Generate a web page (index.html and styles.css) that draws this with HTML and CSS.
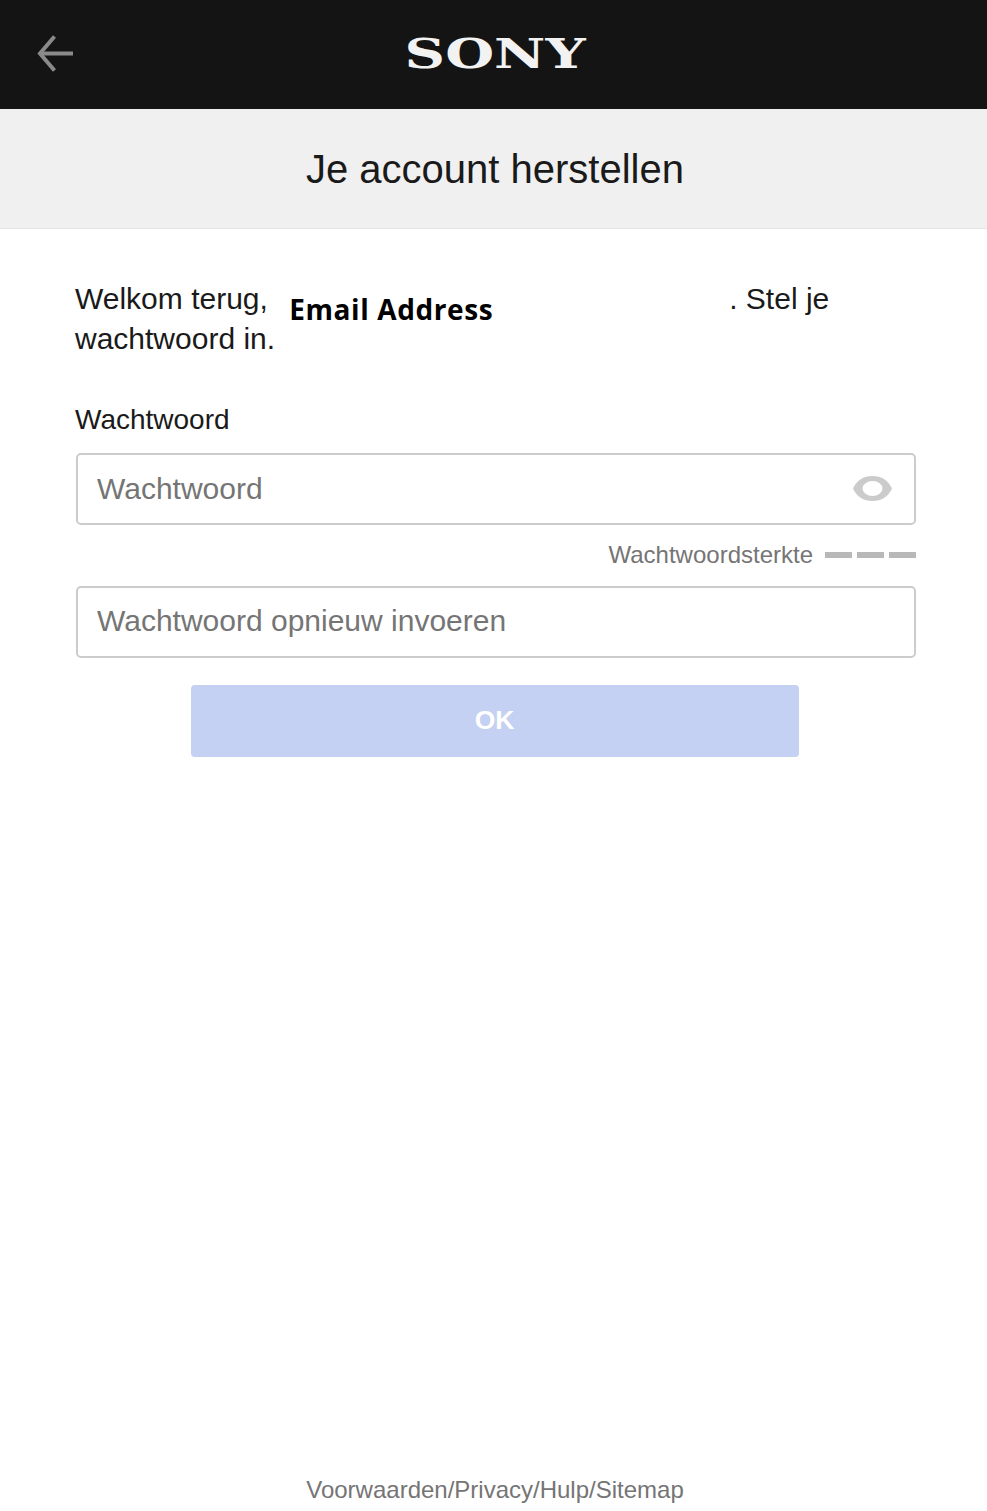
FILE: index.html
```html
<!DOCTYPE html>
<html lang="nl">
<head>
  <meta charset="UTF-8">
  <title>Je account herstellen</title>
  <meta name="viewport" content="width=device-width, initial-scale=1.0">
  <link rel="stylesheet" href="styles.css">
</head>
<body>
  <header class="kop">
    <a class="terug" href="#" aria-label="Terug">
      <svg width="38" height="38" viewBox="0 0 38 38" fill="none" stroke="#8a8a8a" stroke-width="4">
        <path d="M37 18.500H4"/>
        <path d="M18.500 1.500L4 18.500L18.500 35.500"/>
      </svg>
    </a>
    <span class="logo">SONY</span>
  </header>

  <div class="titelbalk">
    <h1>Je account herstellen</h1>
  </div>

  <main class="inhoud">
    <p class="welkom">Welkom terug, <span class="adres">Email Address</span>. Stel je wachtwoord in.</p>

    <label class="veldnaam" for="wachtwoord">Wachtwoord</label>
    <div class="veld">
      <input id="wachtwoord" type="password" placeholder="Wachtwoord">
      <svg class="oog" width="39" height="25" viewBox="0 0 39 25">
        <path fill="#cbcbcb" fill-rule="evenodd" d="M0 12.500C3.500 4.500 10.500 0 19.500 0S35.500 4.500 39 12.500C35.500 20.500 28.500 25 19.500 25S3.500 20.500 0 12.500zM19.500 5A10 7.500 0 1 0 19.500 20A10 7.500 0 1 0 19.500 5z"/>
      </svg>
    </div>

    <div class="sterkte">
      <span>Wachtwoordsterkte</span>
      <div class="streepjes"><i></i><i></i><i></i></div>
    </div>

    <div class="veld herhaal">
      <input type="password" placeholder="Wachtwoord opnieuw invoeren" aria-label="Wachtwoord opnieuw invoeren">
    </div>

    <button class="knop" type="button">OK</button>
  </main>

  <footer class="voet">
    <a href="#">Voorwaarden/Privacy/Hulp/Sitemap</a>
  </footer>
</body>
</html>
```

FILE: styles.css
```css
* {
  box-sizing: border-box;
}

html, body {
  height: 100%;
}

body {
  margin: 0;
  display: flex;
  flex-direction: column;
  min-height: 1511px;
  font-family: "Liberation Sans", Arial, sans-serif;
  color: #1a1a1a;
  background-color: #fff;
}

.kop {
  position: relative;
  display: flex;
  align-items: center;
  justify-content: center;
  height: 109px;
  background-color: #141414;
}

.terug {
  position: absolute;
  left: 36px;
  top: 35px;
  display: block;
  height: 38px;
}

.logo {
  display: block;
  margin-left: 4px;
  font-family: "DejaVu Serif", "Liberation Serif", serif;
  font-weight: bold;
  font-size: 41px;
  line-height: 1;
  color: #f2f2f2;
  transform: scaleX(1.37);
}

.titelbalk {
  height: 120px;
  display: flex;
  align-items: center;
  justify-content: center;
  padding-top: 2px;
  padding-left: 3px;
  background-color: #f0f0f0;
  border-bottom: 1px solid #e4e4e4;
}

.titelbalk h1 {
  margin: 0;
  font-size: 40px;
  font-weight: normal;
  color: #1a1a1a;
}

.inhoud {
  flex: 1;
  display: flex;
  flex-direction: column;
  padding: 50px 71px 0 75px;
}

.welkom {
  margin: 0 0 41px;
  font-size: 30px;
  line-height: 40px;
}

.adres {
  display: inline-block;
  width: 453px;
  padding-left: 13px;
  position: relative;
  top: 11px;
  font-family: "Open Sans", sans-serif;
  font-size: 28px;
  font-weight: bold;
  letter-spacing: 0.6px;
  line-height: 30px;
  color: #000;
}

.veldnaam {
  display: block;
  margin-bottom: 13px;
  font-size: 28px;
  line-height: 40px;
}

.veld {
  position: relative;
  height: 72px;
  margin-left: 1px;
}

.veld input {
  display: block;
  width: 100%;
  height: 100%;
  padding: 0 19px;
  font-family: inherit;
  font-size: 30px;
  color: #1a1a1a;
  background-color: #fff;
  border: 2px solid #ccc;
  border-radius: 5px;
  outline: none;
}

.veld input::placeholder {
  color: #757575;
  opacity: 1;
}

.herhaal input {
  padding-bottom: 2px;
}

.oog {
  position: absolute;
  right: 24px;
  top: 23px;
}

.sterkte {
  display: flex;
  align-items: center;
  justify-content: flex-end;
  gap: 12px;
  height: 61px;
  padding-bottom: 2px;
  font-size: 24px;
  color: #757575;
}

.streepjes {
  display: flex;
  gap: 5px;
}

.streepjes i {
  display: block;
  width: 27px;
  height: 6px;
  background-color: #b8b8b8;
}

.knop {
  align-self: center;
  width: 608px;
  height: 72px;
  margin-top: 27px;
  margin-left: -2px;
  padding: 0 0 2px;
  font-family: inherit;
  font-size: 26.5px;
  font-weight: bold;
  color: #fff;
  background-color: #c4d1f2;
  border: none;
  border-radius: 4px;
}

.voet {
  height: 35px;
  padding-left: 3px;
  text-align: center;
  font-size: 24px;
  line-height: 28px;
}

.voet a {
  color: #757575;
  text-decoration: none;
}
```
